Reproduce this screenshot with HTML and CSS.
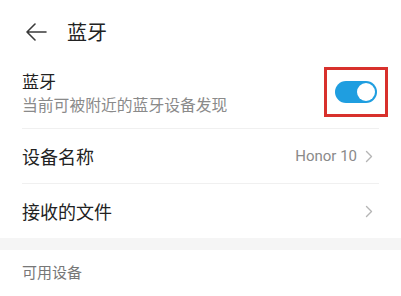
FILE: index.html
```html
<!DOCTYPE html>
<html lang="zh">
<head>
<meta charset="utf-8">
<link rel="stylesheet" href="styles.css">
</head>
<body>
<div class="page">
  <header class="header">
    <svg class="back" width="22" height="18" viewBox="0 0 22 18"><path d="M21 9H2M10 1L2 9l8 8" fill="none" stroke="#3a3a3a" stroke-width="1.6" stroke-linecap="round" stroke-linejoin="round"/></svg>
    <h1 class="title">蓝牙</h1>
  </header>
  <div class="row row-bt">
    <div class="texts">
      <div class="label">蓝牙</div>
      <div class="sub">当前可被附近的蓝牙设备发现</div>
    </div>
    <div class="mark">
      <div class="switch"><div class="knob"></div></div>
    </div>
  </div>
  <div class="sep"></div>
  <div class="row row-item">
    <div class="label label-lg">设备名称</div>
    <div class="right"><span class="value">Honor 10</span><svg class="chev" width="8" height="13" viewBox="0 0 8 13"><path d="M1.5 1.5l5 5-5 5" fill="none" stroke="#b5b5b5" stroke-width="1.4" stroke-linecap="round" stroke-linejoin="round"/></svg></div>
  </div>
  <div class="sep"></div>
  <div class="row row-item">
    <div class="label label-lg">接收的文件</div>
    <div class="right"><svg class="chev" width="8" height="13" viewBox="0 0 8 13"><path d="M1.5 1.5l5 5-5 5" fill="none" stroke="#b5b5b5" stroke-width="1.4" stroke-linecap="round" stroke-linejoin="round"/></svg></div>
  </div>
  <div class="band"></div>
  <div class="section">可用设备</div>
</div>
</body>
</html>
```
FILE: styles.css
```css
html, body {
  margin: 0;
  padding: 0;
  background: #ffffff;
}
body {
  font-family: "Noto Sans CJK SC", "Noto Sans", sans-serif;
  color: #222;
  width: 401px;
  height: 296px;
  overflow: hidden;
}
.header {
  height: 64px;
  display: flex;
  align-items: center;
  padding-left: 25px;
  box-sizing: border-box;
}
.back {
  display: block;
}
.title {
  margin: 0 0 0 20px;
  font-size: 20px;
  font-weight: 400;
  line-height: 28px;
  color: #222;
}
.row {
  display: flex;
  align-items: center;
  justify-content: space-between;
  padding: 0 28px 0 22px;
  box-sizing: border-box;
}
.row-bt {
  height: 64px;
  padding-bottom: 8px;
}
.label {
  font-size: 17px;
  line-height: 25px;
  color: #222;
}
.label-lg {
  font-size: 18px;
}
.sub {
  font-size: 15.8px;
  line-height: 23px;
  color: #8a8a8a;
}
.mark {
  width: 64px;
  height: 50px;
  border: 3px solid #d8312c;
  box-sizing: border-box;
  display: flex;
  align-items: center;
  justify-content: center;
  margin-right: -15px;
}
.switch {
  width: 42px;
  height: 22px;
  border-radius: 11px;
  background: #1f9ee0;
  position: relative;
}
.knob {
  position: absolute;
  right: 2px;
  top: 2px;
  width: 18px;
  height: 18px;
  border-radius: 50%;
  background: #fff;
}
.sep {
  height: 1px;
  background: #f0f0f0;
  margin: 0 22px;
}
.row-item {
  height: 54px;
}
.right {
  display: flex;
  align-items: center;
  gap: 8px;
}
.value {
  font-family: "Roboto", "Noto Sans", sans-serif;
  font-size: 15px;
  color: #8a8a8a;
}
.chev {
  display: block;
}
.band {
  height: 12px;
  background: #f5f5f5;
}
.section {
  padding: 12px 22px 0;
  font-size: 15px;
  line-height: 20px;
  color: #777;
}
```
